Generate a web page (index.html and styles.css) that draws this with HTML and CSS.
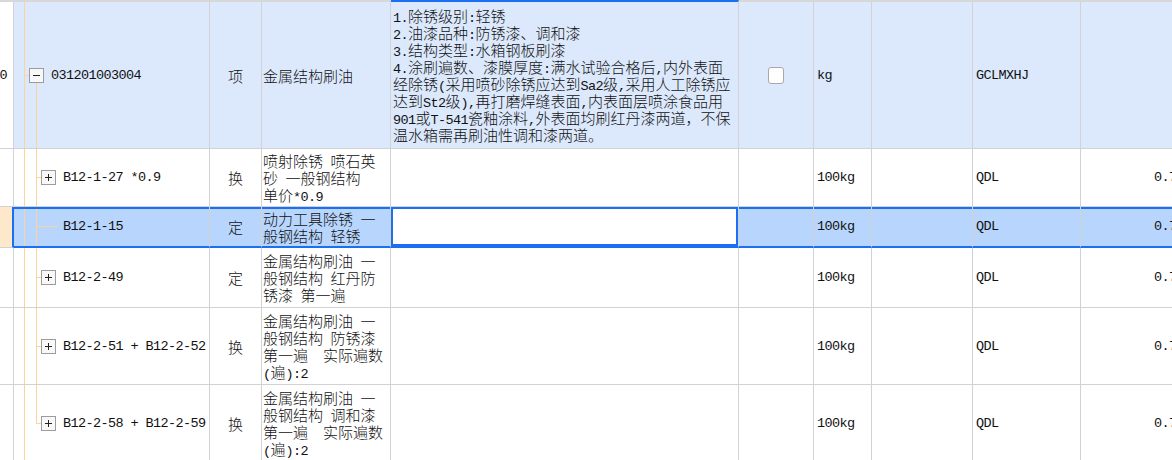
FILE: index.html
```html
<!DOCTYPE html>
<html lang="zh-CN">
<head>
<meta charset="utf-8">
<title>清单</title>
<link rel="stylesheet" href="styles.css">
</head>
<body>
<div class="sheet">
  <div class="row group">
    <div class="c c0 mono">10</div>
    <div class="c c1 tree first"><span class="conn l1"></span><svg class="tog" viewBox="0 0 15 15"><rect x="0.5" y="0.5" width="14" height="14"/><path d="M4 7.5h7"/></svg><span class="code mono">031201003004</span></div>
    <div class="c c2">项</div>
    <div class="c c3"><div>金属结构刷油</div></div>
    <div class="c c4 desc"><div><span class="lat">1.</span>除锈级别<span class="lat">:</span>轻锈<br><span class="lat">2.</span>油漆品种<span class="lat">:</span>防锈漆、调和漆<br><span class="lat">3.</span>结构类型<span class="lat">:</span>水箱钢板刷漆<br><span class="lat">4.</span>涂刷遍数、漆膜厚度<span class="lat">:</span>满水试验合格后<span class="lat">,</span>内外表面<br>经除锈<span class="lat">(</span>采用喷砂除锈应达到<span class="lat">Sa2</span>级<span class="lat">,</span>采用人工除锈应<br>达到<span class="lat">St2</span>级<span class="lat">),</span>再打磨焊缝表面<span class="lat">,</span>内表面层喷涂食品用<br><span class="lat">901</span>或<span class="lat">T-541</span>瓷釉涂料<span class="lat">,</span>外表面均刷红丹漆两道，不保<br>温水箱需再刷油性调和漆两道。</div></div>
    <div class="c c5"><span class="chk"></span></div>
    <div class="c c6 mono">kg</div>
    <div class="c c7"></div>
    <div class="c c8 mono">GCLMXHJ</div>
    <div class="c c9 mono"></div>
  </div>

  <div class="row">
    <div class="c c0"></div>
    <div class="c c1 tree"><span class="conn l2"></span><svg class="tog" viewBox="0 0 15 15"><rect x="0.5" y="0.5" width="14" height="14"/><path d="M4 7.5h7M7.5 4v7"/></svg><span class="code mono">B12-1-27 *0.9</span></div>
    <div class="c c2">换</div>
    <div class="c c3"><div>喷射除锈<span class="lat"> </span>喷石英<br>砂<span class="lat"> </span>一般钢结构<br>单价<span class="lat">*0.9</span></div></div>
    <div class="c c4"></div>
    <div class="c c5"></div>
    <div class="c c6 mono">100kg</div>
    <div class="c c7"></div>
    <div class="c c8 mono">QDL</div>
    <div class="c c9 mono">0.75</div>
  </div>

  <div class="row sel">
    <div class="c c0"></div>
    <div class="c c1 tree"><span class="conn leaf"></span><span class="code mono leafcode">B12-1-15</span></div>
    <div class="c c2">定</div>
    <div class="c c3"><div>动力工具除锈<span class="lat"> </span>一<br>般钢结构<span class="lat"> </span>轻锈</div></div>
    <div class="c c4 active"></div>
    <div class="c c5"></div>
    <div class="c c6 mono">100kg</div>
    <div class="c c7"></div>
    <div class="c c8 mono">QDL</div>
    <div class="c c9 mono">0.75</div>
  </div>

  <div class="row">
    <div class="c c0"></div>
    <div class="c c1 tree"><span class="conn l2"></span><svg class="tog" viewBox="0 0 15 15"><rect x="0.5" y="0.5" width="14" height="14"/><path d="M4 7.5h7M7.5 4v7"/></svg><span class="code mono">B12-2-49</span></div>
    <div class="c c2">定</div>
    <div class="c c3"><div>金属结构刷油<span class="lat"> </span>一<br>般钢结构<span class="lat"> </span>红丹防<br>锈漆<span class="lat"> </span>第一遍</div></div>
    <div class="c c4"></div>
    <div class="c c5"></div>
    <div class="c c6 mono">100kg</div>
    <div class="c c7"></div>
    <div class="c c8 mono">QDL</div>
    <div class="c c9 mono">0.75</div>
  </div>

  <div class="row">
    <div class="c c0"></div>
    <div class="c c1 tree"><span class="conn l2"></span><svg class="tog" viewBox="0 0 15 15"><rect x="0.5" y="0.5" width="14" height="14"/><path d="M4 7.5h7M7.5 4v7"/></svg><span class="code mono">B12-2-51 + B12-2-52</span></div>
    <div class="c c2">换</div>
    <div class="c c3"><div>金属结构刷油<span class="lat"> </span>一<br>般钢结构<span class="lat"> </span>防锈漆<br>第一遍<span class="lat">&nbsp;&nbsp;</span>实际遍数<br><span class="lat">(</span>遍<span class="lat">):2</span></div></div>
    <div class="c c4"></div>
    <div class="c c5"></div>
    <div class="c c6 mono">100kg</div>
    <div class="c c7"></div>
    <div class="c c8 mono">QDL</div>
    <div class="c c9 mono">0.75</div>
  </div>

  <div class="row">
    <div class="c c0"></div>
    <div class="c c1 tree last"><span class="conn l2"></span><svg class="tog" viewBox="0 0 15 15"><rect x="0.5" y="0.5" width="14" height="14"/><path d="M4 7.5h7M7.5 4v7"/></svg><span class="code mono">B12-2-58 + B12-2-59</span></div>
    <div class="c c2">换</div>
    <div class="c c3"><div>金属结构刷油<span class="lat"> </span>一<br>般钢结构<span class="lat"> </span>调和漆<br>第一遍<span class="lat">&nbsp;&nbsp;</span>实际遍数<br><span class="lat">(</span>遍<span class="lat">):2</span></div></div>
    <div class="c c4"></div>
    <div class="c c5"></div>
    <div class="c c6 mono">100kg</div>
    <div class="c c7"></div>
    <div class="c c8 mono">QDL</div>
    <div class="c c9 mono">0.75</div>
  </div>
</div>
</body>
</html>
```

FILE: styles.css
```css
html, body {
  margin: 0;
  padding: 0;
}

body {
  width: 1172px;
  height: 460px;
  overflow: hidden;
  background: #ffffff;
  color: #111111;
  font-family: "Noto Sans CJK SC", "Noto Sans", sans-serif;
  font-weight: 300;
  font-size: 15px;
  line-height: 17px;
}

.sheet {
  --grid: #d2d2d2;
  --tree: #fbd39e;
  --blue: #1b6ff2;
  display: grid;
  grid-template-columns: 34px 196px 52px 129px 348px 75px 58px 101px 108px 106px;
  grid-template-rows: 149px 58px 41px 60px 77px 77px;
  width: max-content;
  margin-left: -20px;
}

.row {
  display: contents;
}

.c {
  box-sizing: border-box;
  display: flex;
  align-items: center;
  min-width: 0;
  overflow: hidden;
  white-space: nowrap;
  border-right: 1px solid var(--grid);
  border-bottom: 1px solid var(--grid);
}

.mono,
.lat {
  font-family: "Liberation Mono", "DejaVu Sans Mono", monospace;
  font-weight: 400;
  font-size: 13.5px;
  letter-spacing: -0.6px;
}

.lat {
  line-height: 10px;
}

.c0 {
  justify-content: flex-end;
  padding-right: 6px;
}

.c2 {
  justify-content: center;
}

.c3 {
  padding-left: 1px;
}

.c4 {
  padding-left: 2px;
}

.c5 {
  justify-content: center;
}

.c6,
.c8 {
  padding-left: 3px;
}

.c9 {
  justify-content: flex-end;
  padding-right: 2px;
}

/* tree column */
.tree {
  background-repeat: no-repeat;
  background-image: linear-gradient(var(--tree), var(--tree)), linear-gradient(var(--tree), var(--tree));
  background-size: 1px 100%, 1px 100%;
  background-position: 10px 0, 22px 0;
}

.tree.first {
  background-size: 1px 100%, 1px calc(50% - 7px);
  background-position: 10px 0, 22px 100%;
}

.tree.last {
  background-size: 1px 100%, 1px 50%;
  background-position: 10px 0, 22px 0;
}

.conn {
  flex: none;
  height: 1px;
  background: var(--tree);
}

.conn.l1 {
  margin-left: 10px;
  width: 5px;
}

.conn.l2 {
  margin-left: 22px;
  width: 5px;
}

.conn.leaf {
  margin-left: 22px;
  width: 21px;
}

.tog {
  flex: none;
  width: 15px;
  height: 15px;
}

.tog rect {
  fill: #f8f8f8;
  stroke: #9c9c9c;
  stroke-width: 1;
}

.tog path {
  stroke: #222222;
  stroke-width: 1;
  fill: none;
}

.code {
  margin-left: 7px;
}

.code.leafcode {
  margin-left: 6px;
}

.chk {
  box-sizing: border-box;
  width: 16px;
  height: 17px;
  background: #ffffff;
  border: 1px solid #a9a9a9;
  border-radius: 3px;
}

/* group (clause) row */
.group .c {
  background-color: #dce9fc;
  border-top: 2px solid #d8d8d8;
}

.group .c0 {
  background-color: #ffffff;
}

.group .c4 {
  border-top-color: var(--blue);
}

/* selected row */
.sel .c {
  background-color: #b8d6fd;
  border-bottom: 2px solid var(--blue);
  box-shadow: inset 0 2px 0 var(--blue);
}

.sel .c0 {
  background-color: #fde8cc;
  border-bottom: 1px solid var(--grid);
  border-right: 2px solid var(--blue);
  box-shadow: none;
}

.sel .c4.active {
  background-color: #ffffff;
  box-shadow: inset 0 0 0 2px var(--blue);
}
```
